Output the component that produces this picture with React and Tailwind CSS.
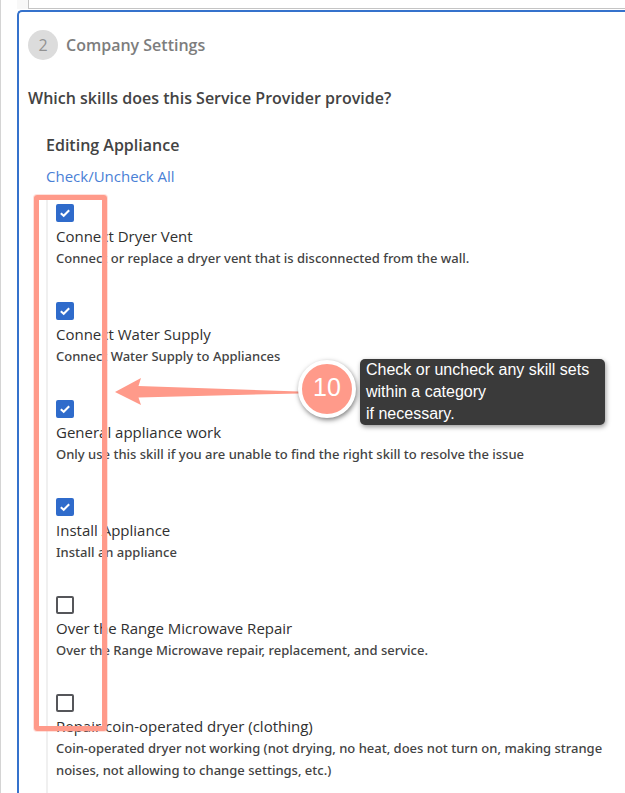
import { useState } from "react";

const SKILLS = [
  { name: "Connect Dryer Vent", text: "Connect or replace a dryer vent that is disconnected from the wall.", on: true },
  { name: "Connect Water Supply", text: "Connect Water Supply to Appliances", on: true },
  { name: "General appliance work", text: "Only use this skill if you are unable to find the right skill to resolve the issue", on: true },
  { name: "Install Appliance", text: "Install an appliance", on: true },
  { name: "Over the Range Microwave Repair", text: "Over the Range Microwave repair, replacement, and service.", on: false },
  {
    name: "Repair coin-operated dryer (clothing)",
    text: "Coin-operated dryer not working (not drying, no heat, does not turn on, making strange noises, not allowing to change settings, etc.)",
    on: false,
  },
];

function Skill({ id, skill, checked, onChange }) {
  return (
    <li className="flex flex-col items-start">
      <span className="grid size-[18px]">
        <input
          id={id}
          type="checkbox"
          checked={checked}
          onChange={onChange}
          className="peer col-start-1 row-start-1 size-[18px] appearance-none rounded-[2px] border-2 border-[#55565a] bg-white checked:border-[#2f6bcb] checked:bg-[#2f6bcb]"
        />
        <svg
          viewBox="0 0 18 18"
          className="pointer-events-none invisible col-start-1 row-start-1 size-[18px] peer-checked:visible"
          fill="none"
          stroke="white"
          strokeWidth="2"
        >
          <path d="M4.8 9.2 7.7 11.8 13.2 6.2" />
        </svg>
      </span>
      <label htmlFor={id} className="mt-[3px] text-[15px] leading-[22px] text-[#303030]">
        {skill.name}
      </label>
      <p className="font-['Noto_Sans','Open_Sans',sans-serif] text-[13px] leading-[22px] font-medium">{skill.text}</p>
    </li>
  );
}

function Callout() {
  return (
    <div className="pointer-events-none absolute top-2 -left-2">
      <div className="absolute -top-[9px] -left-[6px] h-[536px] w-[73px] rounded-[3px] border-5 border-[#ff9a8a] ring-1 ring-[#ff9a8a]/30" />
      <svg className="absolute top-[172px] left-[75px] h-8 w-[184px]" viewBox="0 0 184 32" fill="#ff9a8a">
        <path d="M0 16 26 2 23.500 10 184 15.500V17.500L23.500 21.500 26 29Z" />
      </svg>
      <div className="absolute top-[156px] left-[258px] flex size-[58px] items-center justify-center rounded-full border-4 border-white bg-[#ff9a8a] pb-[2px] font-['Liberation_Sans',Arial,sans-serif] text-[25px] text-white shadow-[1px_2px_5px_rgba(0,0,0,0.5)]">
        10
      </div>
      <div className="absolute top-[155px] left-[320px] w-[245px] rounded-[5px] bg-[#3a3a3a] pl-[6px] font-['Liberation_Sans',Arial,sans-serif] text-base leading-[22px] text-white shadow-[1px_2px_5px_rgba(0,0,0,0.4)]">
        Check or uncheck any skill sets
        <br />
        within a category
        <br />
        if necessary.
      </div>
    </div>
  );
}

export default function App() {
  const [checked, setChecked] = useState(SKILLS.map((s) => s.on));
  const toggle = (i) => setChecked(checked.map((c, n) => (n === i ? !c : c)));
  const toggleAll = () => setChecked(checked.map(() => !checked.every(Boolean)));

  return (
    <main className="flex min-h-screen flex-col overflow-x-hidden border-l border-[#d4d4d4] bg-white pl-4 font-['Open_Sans','Noto_Sans',sans-serif] text-[#434343]">
      <div className="bg-[#f8f8f8] pl-[11px]">
        <div className="h-[9px] border-b border-l border-[#c4c4c4] bg-white" />
      </div>
      <section className="mt-px flex-1 rounded-tl-[5px] border-t-2 border-l-2 border-[#3572cc] pl-[9px]">
        <header className="mt-[18px] flex items-center gap-2 text-[#7d7d7d]">
          <span className="flex size-[30px] items-center justify-center rounded-full bg-[#dcdcdc] text-base text-[#929292]">2</span>
          <h1 className="text-base leading-6 font-semibold">Company Settings</h1>
        </header>
        <h2 className="mt-[26px] text-base leading-6 font-semibold">Which skills does this Service Provider provide?</h2>
        <div className="pr-2 pl-[18px]">
          <h3 className="mt-[23px] text-base leading-6 font-semibold">Editing Appliance</h3>
          <button type="button" onClick={toggleAll} className="mt-2 block text-[15px] leading-[22px] text-[#4a7fd6]">
            Check/Uncheck All
          </button>
          <div className="relative mt-[9px] border-l-2 border-[#f0f0f0] pt-2 pb-3 pl-2">
            <ul className="flex flex-col gap-[33px]">
              {SKILLS.map((s, i) => (
                <Skill key={s.name} id={`skill-${i}`} skill={s} checked={checked[i]} onChange={() => toggle(i)} />
              ))}
            </ul>
            <Callout />
          </div>
        </div>
      </section>
    </main>
  );
}
